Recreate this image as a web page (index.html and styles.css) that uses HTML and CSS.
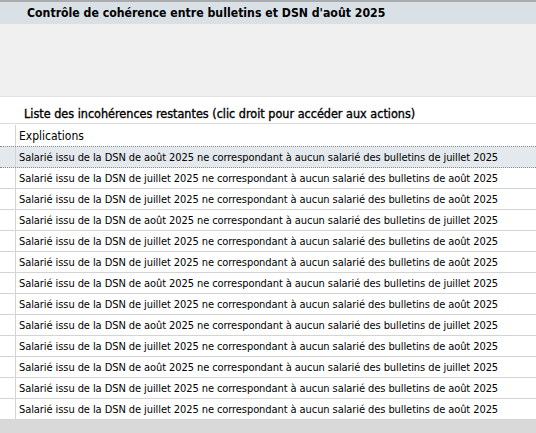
FILE: index.html
```html
<!DOCTYPE html>
<html lang="fr">
<head>
<meta charset="utf-8">
<link rel="stylesheet" href="styles.css">
</head>
<body>
<div class="page">
  <div class="titlebar"><span class="title">Contrôle de cohérence entre bulletins et DSN d'août 2025</span></div>
  <div class="blank"></div>
  <div class="listhead">Liste des incohérences restantes (clic droit pour accéder aux actions)</div>
  <div class="grid">
    <div class="row header"><div class="lead"></div><div class="cell">Explications</div></div>
    <div class="row selected"><div class="lead"></div><div class="cell">Salarié issu de la DSN de août 2025 ne correspondant à aucun salarié des bulletins de juillet 2025</div></div>
    <div class="row"><div class="lead"></div><div class="cell">Salarié issu de la DSN de juillet 2025 ne correspondant à aucun salarié des bulletins de août 2025</div></div>
    <div class="row"><div class="lead"></div><div class="cell">Salarié issu de la DSN de juillet 2025 ne correspondant à aucun salarié des bulletins de août 2025</div></div>
    <div class="row"><div class="lead"></div><div class="cell">Salarié issu de la DSN de août 2025 ne correspondant à aucun salarié des bulletins de juillet 2025</div></div>
    <div class="row"><div class="lead"></div><div class="cell">Salarié issu de la DSN de juillet 2025 ne correspondant à aucun salarié des bulletins de août 2025</div></div>
    <div class="row"><div class="lead"></div><div class="cell">Salarié issu de la DSN de juillet 2025 ne correspondant à aucun salarié des bulletins de août 2025</div></div>
    <div class="row"><div class="lead"></div><div class="cell">Salarié issu de la DSN de août 2025 ne correspondant à aucun salarié des bulletins de juillet 2025</div></div>
    <div class="row"><div class="lead"></div><div class="cell">Salarié issu de la DSN de juillet 2025 ne correspondant à aucun salarié des bulletins de août 2025</div></div>
    <div class="row"><div class="lead"></div><div class="cell">Salarié issu de la DSN de août 2025 ne correspondant à aucun salarié des bulletins de juillet 2025</div></div>
    <div class="row"><div class="lead"></div><div class="cell">Salarié issu de la DSN de juillet 2025 ne correspondant à aucun salarié des bulletins de août 2025</div></div>
    <div class="row"><div class="lead"></div><div class="cell">Salarié issu de la DSN de août 2025 ne correspondant à aucun salarié des bulletins de juillet 2025</div></div>
    <div class="row"><div class="lead"></div><div class="cell">Salarié issu de la DSN de juillet 2025 ne correspondant à aucun salarié des bulletins de août 2025</div></div>
    <div class="row"><div class="lead"></div><div class="cell">Salarié issu de la DSN de juillet 2025 ne correspondant à aucun salarié des bulletins de août 2025</div></div>
  </div>
  <div class="footer"></div>
</div>
</body>
</html>
```

FILE: styles.css
```css
html, body {
  margin: 0;
  padding: 0;
  background: #ffffff;
}
.page {
  width: 536px;
  height: 433px;
  overflow: hidden;
  display: flex;
  flex-direction: column;
  font-family: "DejaVu Sans Condensed", "DejaVu Sans", sans-serif;
  color: #000;
}
.titlebar {
  height: 22px;
  border-top: 2px solid #a9acae;
  background: #d9e1e6;
  display: flex;
  align-items: center;
  padding-left: 27px;
  flex: none;
}
.title {
  font-weight: bold;
  font-size: 12.2px;
}
.blank {
  height: 72px;
  background: #f0f0f0;
  border-bottom: 1px solid #e2e2e2;
  flex: none;
}
.listhead {
  height: 27px;
  box-sizing: border-box;
  display: flex;
  align-items: center;
  padding-left: 24px;
  padding-top: 7px;
  font-size: 12.5px;
  -webkit-text-stroke: 0.35px #000;
  border-bottom: 1px solid #dcdcdc;
  background: #fff;
  flex: none;
}
.grid {
  display: flex;
  flex-direction: column;
  flex: none;
}
.row {
  display: flex;
  height: 21px;
  box-sizing: border-box;
  border-bottom: 1px solid #d4d4d4;
  font-size: 11px;
  letter-spacing: -0.08px;
}
.lead {
  width: 15px;
  border-right: 1px solid #d4d4d4;
  flex: none;
}
.cell {
  padding-left: 3px;
  display: flex;
  align-items: center;
  white-space: nowrap;
}
.header {
  height: 23px;
  padding-top: 1px;
}
.header .cell {
  font-size: 12px;
  letter-spacing: 0;
}
.selected {
  background: #e4e9ed;
  border-top: 1px dotted #8a8a8a;
  border-bottom: 1px dotted #8a8a8a;
}
.header + .selected {
  margin-top: -1px;
  height: 22px;
}
.footer {
  flex: 1;
  background: #d9d9d9;
}
```
